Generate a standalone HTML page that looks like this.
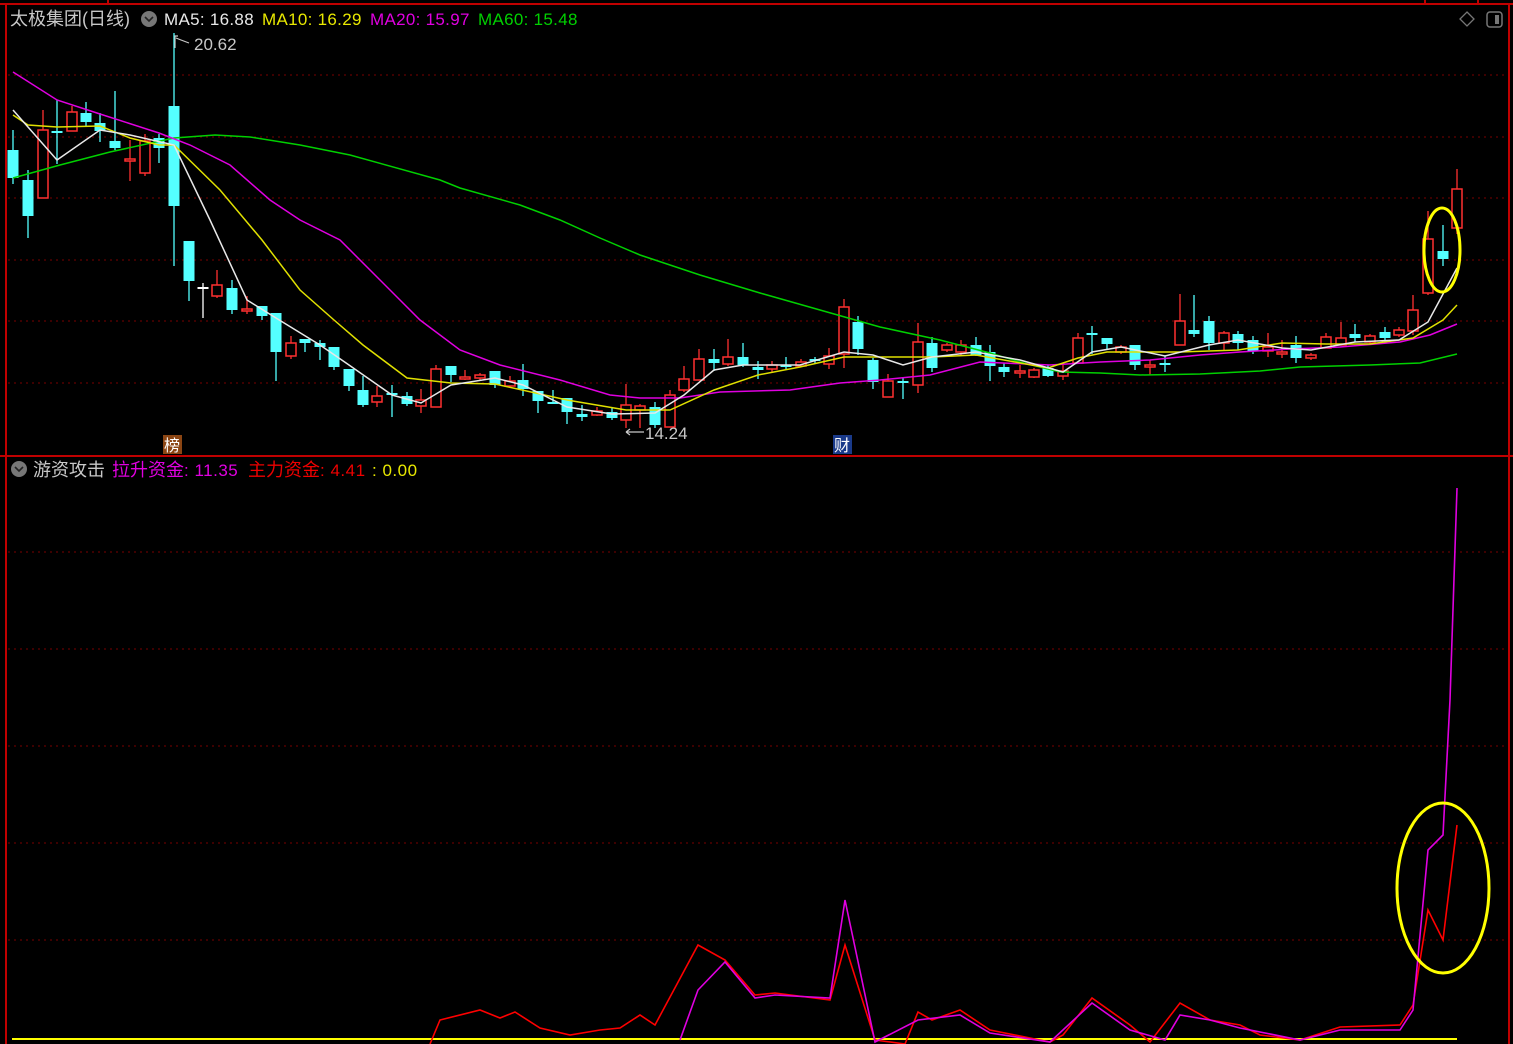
<!DOCTYPE html>
<html><head><meta charset="utf-8"><style>
html,body{margin:0;padding:0;background:#000;width:1513px;height:1044px;overflow:hidden}
svg{display:block}
text{font-family:"Liberation Sans","Noto Sans CJK SC",sans-serif}
</style></head><body>
<svg id="s" width="1513" height="1044" xmlns="http://www.w3.org/2000/svg">
<rect width="1513" height="1044" fill="#000"/>
<g stroke="#7a0000" stroke-width="1" stroke-dasharray="2,4">
<line x1="8" y1="75" x2="1506" y2="75"/><line x1="8" y1="137" x2="1506" y2="137"/>
<line x1="8" y1="198" x2="1506" y2="198"/><line x1="8" y1="260" x2="1506" y2="260"/>
<line x1="8" y1="321" x2="1506" y2="321"/><line x1="8" y1="383" x2="1506" y2="383"/>
<line x1="8" y1="552" x2="1506" y2="552"/><line x1="8" y1="649" x2="1506" y2="649"/>
<line x1="8" y1="746" x2="1506" y2="746"/><line x1="8" y1="843" x2="1506" y2="843"/>
<line x1="8" y1="940" x2="1506" y2="940"/>
</g>
<g stroke="#c00000" stroke-width="2" fill="none">
<line x1="0" y1="4" x2="1513" y2="4"/>
<line x1="6" y1="4" x2="6" y2="1044"/>
<line x1="1509" y1="4" x2="1509" y2="1044"/>
<line x1="0" y1="456" x2="1513" y2="456"/>
<line x1="108" y1="0" x2="108" y2="4"/><line x1="1425" y1="0" x2="1425" y2="4"/><line x1="1478" y1="0" x2="1478" y2="4"/>
</g>
<g id="candles"></g>
<g fill="none" stroke-width="1.5">
<polyline stroke="#00d000" points="13,178 60,165 110,152 174,138 215,135 250,137 300,145 350,155 440,180 460,188 520,205 560,220 600,238 640,255 700,275 760,293 820,310 880,327 940,340 990,353 1020,362 1060,372 1100,373 1140,375 1200,374 1260,371 1300,367 1370,365 1420,363 1457,354"/>
<polyline stroke="#e000e0" points="13,72 57,100 100,114 159,133 190,145 230,165 270,200 300,220 340,240 380,280 420,320 460,350 500,365 560,380 610,395 640,398 680,398 720,392 790,390 840,383 880,380 930,375 980,362 1050,365 1100,362 1150,360 1200,355 1240,352 1290,349 1340,347 1400,342 1430,335 1457,324"/>
<polyline stroke="#e0e000" points="13,115 28,125 57,127 100,126 130,138 159,145 174,145 220,190 262,240 300,290 334,320 363,345 407,378 451,383 495,384 567,400 626,410 670,410 714,390 758,375 800,367 844,357 888,357 932,357 976,355 1048,368 1078,358 1107,352 1180,352 1238,350 1282,343 1326,344 1370,344 1413,338 1443,320 1457,305"/>
<polyline stroke="#e8e8e8" points="13,110 57,160 100,130 130,135 174,145 210,220 247,300 276,318 320,345 349,365 392,395 421,403 451,385 495,378 523,385 567,407 612,414 655,413 684,395 714,370 743,365 800,365 844,352 873,355 903,365 932,357 976,352 1020,360 1063,372 1092,352 1121,347 1165,356 1209,345 1238,340 1282,348 1311,350 1355,342 1399,340 1428,322 1457,268"/>
</g>
<ellipse cx="1442" cy="250" rx="18" ry="42" fill="none" stroke="#ffff00" stroke-width="3"/>
<line x1="12" y1="1039" x2="1457" y2="1039" stroke="#ffff00" stroke-width="2"/>
<g fill="none" stroke-width="1.6">
<polyline stroke="#ff0000" points="430,1044 440,1020 480,1010 500,1018 515,1012 540,1028 570,1035 600,1030 620,1028 640,1015 655,1025 698,945 725,960 755,995 775,993 830,1000 845,945 875,1040 905,1044 918,1012 932,1020 960,1010 990,1030 1050,1042 1063,1035 1092,998 1130,1025 1150,1042 1180,1003 1210,1020 1240,1025 1260,1035 1300,1040 1340,1027 1400,1025 1413,1005 1428,910 1443,940 1457,825"/>
<polyline stroke="#e000e0" points="680,1040 698,990 725,962 755,998 775,995 830,998 845,900 875,1042 918,1020 960,1015 990,1033 1050,1042 1092,1003 1130,1030 1165,1040 1180,1015 1210,1020 1240,1028 1300,1040 1340,1030 1400,1030 1413,1010 1428,850 1443,835 1450,700 1457,488"/>
</g>
<ellipse cx="1443" cy="888" rx="46" ry="85" fill="none" stroke="#ffff00" stroke-width="3"/>
<text x="10" y="25" font-size="18" fill="#c8c8c8">太极集团(日线)</text>
<circle cx="149" cy="19" r="8" fill="#777"/><path d="M145,17 l4,4 l4,-4" stroke="#222" stroke-width="1.6" fill="none"/>
<text x="164" y="25" font-size="17" fill="#e8e8e8" letter-spacing="0.3">MA5: 16.88</text>
<text x="262" y="25" font-size="17" fill="#e8e800" letter-spacing="0.3">MA10: 16.29</text>
<text x="370" y="25" font-size="17" fill="#e000e0" letter-spacing="0.3">MA20: 15.97</text>
<text x="478" y="25" font-size="17" fill="#00d000" letter-spacing="0.3">MA60: 15.48</text>
<path d="M1467,12 l7,7 l-7,7 l-7,-7z" stroke="#777" stroke-width="1.3" fill="none"/>
<rect x="1487" y="12" width="15" height="15" rx="3" stroke="#777" stroke-width="1.5" fill="none"/><rect x="1495" y="15" width="4" height="9" fill="#777"/>
<text x="194" y="50" font-size="17" fill="#c8c8c8">20.62</text>
<path d="M175,48 V36 h3 M176,38 l5,2 l8,3" stroke="#c8c8c8" stroke-width="1.2" fill="none"/>
<text x="645" y="439" font-size="17" fill="#c8c8c8">14.24</text>
<path d="M626,432 h18 M626,432 l4,-3 M626,432 l4,3" stroke="#c8c8c8" stroke-width="1.2" fill="none"/>
<rect x="163" y="435" width="19" height="19" fill="#8b4513"/><text x="164" y="451" font-size="16" fill="#fff">榜</text>
<rect x="833" y="435" width="19" height="19" fill="#1a3a8a"/><text x="834" y="451" font-size="16" fill="#fff">财</text>
<circle cx="19" cy="469" r="8" fill="#777"/><path d="M15,467 l4,4 l4,-4" stroke="#222" stroke-width="1.6" fill="none"/>
<text x="33" y="476" font-size="18" fill="#c8c8c8">游资攻击</text>
<text x="112" y="476" font-size="18" fill="#e000e0">拉升资金<tspan font-size="17" letter-spacing="0.5">: 11.35</tspan></text>
<text x="248" y="476" font-size="18" fill="#ee0000">主力资金<tspan font-size="17" letter-spacing="0.5">: 4.41</tspan></text>
<text x="372" y="476" font-size="17" fill="#e8e800" letter-spacing="0.5">: 0.00</text>
</svg>
<script>
var C=[
[13,'c',150,178,130,184],[28,'c',180,216,170,238],[43,'r',130,198,110,198],[57,'c',131,133,100,164],[72,'r',112,131,106,131],[86,'c',113,122,102,127],[100,'c',123,131,113,142],[115,'c',141,148,91,150],[130,'r',159,161,140,181],[145,'r',141,173,134,176],[159,'c',138,148,134,163],[174,'c',106,206,33,266],[189,'c',241,281,241,301],[203,'w',287,289,283,318],[217,'r',285,296,270,298],[232,'c',288,310,280,314],[247,'r',309,311,296,314],[262,'c',306,316,306,320],[276,'c',313,352,313,381],[291,'r',343,356,336,359],[305,'c',339,343,339,352],[320,'c',343,347,340,360],[334,'c',347,367,347,370],[349,'c',369,386,369,391],[363,'c',390,405,376,407],[377,'r',396,402,386,407],[392,'c',393,395,385,417],[407,'c',396,404,392,406],[421,'r',400,406,389,413],[436,'r',369,407,365,407],[451,'c',366,375,366,382],[465,'r',377,379,370,380],[480,'r',375,378,373,380],[495,'c',371,385,371,388],[510,'r',381,386,376,388],[523,'c',380,389,364,396],[538,'c',391,401,391,413],[553,'c',402,404,390,404],[567,'c',398,412,398,424],[582,'c',414,417,405,421],[597,'r',411,415,407,416],[612,'c',412,418,408,420],[626,'r',405,420,384,428],[640,'r',406,410,404,428],[655,'c',407,425,402,428],[670,'r',395,427,390,427],[684,'r',379,390,366,392],[699,'r',359,380,349,380],[714,'c',359,363,349,371],[728,'r',357,364,339,366],[743,'c',357,365,343,367],[758,'c',367,370,361,379],[772,'r',365,369,361,373],[786,'c',365,367,357,369],[801,'r',362,366,359,367],[815,'c',359,361,357,363],[829,'r',356,364,348,369],[844,'r',307,354,299,368],[858,'c',322,349,316,355],[873,'c',360,382,358,389],[888,'r',381,397,374,397],[903,'c',381,383,378,399],[918,'r',342,385,323,393],[932,'c',343,368,337,372],[947,'r',345,350,343,352],[961,'r',345,352,340,356],[976,'c',345,355,337,356],[990,'c',352,366,345,381],[1004,'c',367,372,363,377],[1020,'r',371,373,365,378],[1034,'r',370,377,368,378],[1048,'c',368,376,365,377],[1063,'r',371,376,365,380],[1078,'r',338,363,333,363],[1092,'c',333,335,326,354],[1107,'c',338,344,338,349],[1121,'r',347,352,345,354],[1135,'c',345,365,345,370],[1150,'r',365,367,360,375],[1165,'c',363,365,356,372],[1180,'r',321,345,294,345],[1194,'c',330,334,295,337],[1209,'c',321,343,316,350],[1224,'r',333,343,331,350],[1238,'c',334,343,331,350],[1253,'c',340,351,336,354],[1268,'r',347,351,333,357],[1282,'r',352,354,340,358],[1296,'c',345,358,336,363],[1311,'r',355,358,353,360],[1326,'r',337,348,333,348],[1341,'r',338,345,322,345],[1355,'c',334,338,324,342],[1370,'r',336,342,334,344],[1385,'c',332,338,327,343],[1399,'r',330,335,327,337],[1413,'r',310,331,295,335],[1428,'r',239,293,211,295],[1443,'c',251,259,225,266],[1457,'r',189,228,169,234]];
var g=document.getElementById('candles'),h='';
C.forEach(function(c){var x=c[0],col=c[1]=='c'?'#54ffff':c[1]=='r'?'#ff3030':'#ffffff';
h+='<line x1="'+x+'" y1="'+c[4]+'" x2="'+x+'" y2="'+c[5]+'" stroke="'+col+'" stroke-width="1.3"/>';
var y=c[2],hh=Math.max(c[3]-c[2],1.5);
if(c[1]=='r') h+='<rect x="'+(x-5)+'" y="'+y+'" width="10" height="'+hh+'" fill="#000" stroke="'+col+'" stroke-width="1.5"/>';
else h+='<rect x="'+(x-5.5)+'" y="'+y+'" width="11" height="'+hh+'" fill="'+col+'"/>';});
g.innerHTML=h;
</script>
</body></html>
